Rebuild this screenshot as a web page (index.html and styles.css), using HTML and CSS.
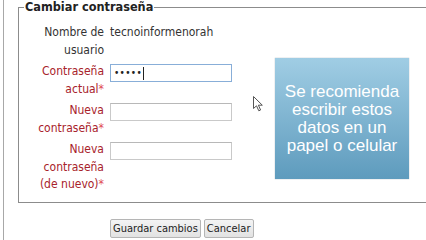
FILE: index.html
```html
<!DOCTYPE html>
<html lang="es">
<head>
<meta charset="utf-8">
<title>Cambiar contraseña</title>
<link rel="stylesheet" href="styles.css">
</head>
<body>
<div class="page">
  <fieldset class="box">
    <legend class="legend">Cambiar contraseña</legend>
    <div class="content">
      <div class="form">
        <div class="label plain">Nombre de<br>usuario</div>
        <div class="value">tecnoinformenorah</div>

        <div class="label">Contraseña<br>actual<span class="req">*</span></div>
        <div class="field"><span class="input focus"><span class="dots">•••••</span><span class="caret"></span></span></div>

        <div class="label">Nueva<br>contraseña<span class="req">*</span></div>
        <div class="field"><span class="input"></span></div>

        <div class="label">Nueva<br>contraseña<br>(de nuevo)<span class="req">*</span></div>
        <div class="field"><span class="input"></span></div>
      </div>
      <div class="tip">Se recomienda escribir estos datos en un papel o celular</div>
    </div>
  </fieldset>
  <div class="buttons">
    <button class="btn" type="button">Guardar cambios</button>
    <button class="btn" type="button">Cancelar</button>
  </div>
  <svg class="pointer" width="12" height="18" viewBox="0 0 12 18">
    <path d="M1.5 1.5 L1.5 13.5 L4.5 10.8 L6.8 15.8 L8.6 15 L6.4 10.2 L10.3 10.2 Z" fill="#fff" stroke="#555" stroke-width="1" stroke-linejoin="round"/>
  </svg>
</div>
</body>
</html>
```

FILE: styles.css
```css
html, body {
  margin: 0;
  padding: 0;
  background: #fff;
  overflow: hidden;
}

.page {
  position: relative;
  width: 423px;
  height: 240px;
  margin-left: 3px;
  border-left: 1px solid #a8a8a8;
  padding-left: 14px;
  box-sizing: border-box;
  overflow: hidden;
  font-family: "DejaVu Sans Condensed", "DejaVu Sans", Verdana, sans-serif;
  font-size: 12px;
  color: #333;
}

.box {
  margin: 0;
  padding: 10px 0 8px 0;
  border: 1px solid #8c8c8c;
  width: 440px;
  box-sizing: border-box;
  min-width: 0;
}

.legend {
  margin-left: 5px;
  padding: 0 1px;
  font-weight: bold;
  font-size: 12.6px;
  line-height: 14px;
  color: #222;
}

.content {
  display: flex;
  align-items: flex-start;
}

.form {
  display: grid;
  grid-template-columns: 85px 122px;
  column-gap: 6px;
  row-gap: 4px;
  line-height: 17.5px;
}

.label {
  text-align: right;
  color: #a8232b;
}

.label.plain {
  color: #333;
}

.req {
  color: #e0484f;
}

.value {
  color: #333;
}

.field {
  padding-top: 1px;
}

.input {
  display: flex;
  align-items: center;
  width: 122px;
  height: 18px;
  box-sizing: border-box;
  border: 1px solid #c9c9c9;
  border-top-color: #b8b8b8;
  background: #fff;
  padding-left: 3px;
}

.input.focus {
  border-color: #88aed8;
}

.dots {
  font-size: 10px;
  letter-spacing: 0.3px;
  color: #222;
  line-height: 1;
}

.caret {
  width: 1px;
  height: 13px;
  background: #222;
  margin-left: 1px;
}

.tip {
  margin-left: 43px;
  margin-top: 34px;
  width: 134px;
  height: 121px;
  box-sizing: border-box;
  display: flex;
  align-items: center;
  justify-content: center;
  text-align: center;
  padding: 0 6px;
  background: linear-gradient(to bottom, #a0cde4, #5e9bbd);
  box-shadow: 0 0 1px rgba(60, 90, 110, 0.5);
  color: #fff;
  font-family: "Liberation Sans", Arial, sans-serif;
  font-size: 17px;
  line-height: 18px;
}

.buttons {
  display: flex;
  gap: 3px;
  margin-top: 16px;
  margin-left: 92px;
}

.btn {
  height: 19px;
  margin: 0;
  padding: 0 2px;
  font-family: "DejaVu Sans Condensed", "DejaVu Sans", Verdana, sans-serif;
  font-size: 11px;
  color: #222;
  background: linear-gradient(to bottom, #f4f4f4, #e2e2e2);
  border: 1px solid #b5b5b5;
  border-radius: 2px;
}

.pointer {
  position: absolute;
  left: 248px;
  top: 95px;
}
```
